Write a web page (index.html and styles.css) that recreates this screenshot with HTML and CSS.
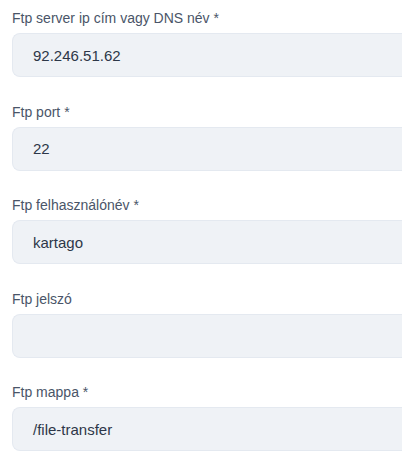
FILE: index.html
```html
<!DOCTYPE html>
<html lang="hu">
<head>
<meta charset="utf-8">
<link rel="stylesheet" href="styles.css">
</head>
<body>
<form class="form">
  <div class="field">
    <label class="label">Ftp server ip cím vagy DNS név *</label>
    <div class="input">92.246.51.62</div>
  </div>
  <div class="field">
    <label class="label">Ftp port *</label>
    <div class="input">22</div>
  </div>
  <div class="field">
    <label class="label">Ftp felhasználónév *</label>
    <div class="input">kartago</div>
  </div>
  <div class="field">
    <label class="label">Ftp jelszó</label>
    <div class="input"></div>
  </div>
  <div class="field">
    <label class="label">Ftp mappa *</label>
    <div class="input">/file-transfer</div>
  </div>
</form>
</body>
</html>
```

FILE: styles.css
```css
html, body {
  margin: 0;
  padding: 0;
  background: #ffffff;
}
body {
  font-family: "Liberation Sans", Arial, sans-serif;
}
.form {
  display: flex;
  flex-direction: column;
  padding: 10px 2px 0 12px;
  gap: 26.5px;
}
.field {
  display: flex;
  flex-direction: column;
  gap: 7px;
}
.label {
  font-size: 14px;
  line-height: 16px;
  color: #4a5568;
}
.input {
  box-sizing: border-box;
  height: 44px;
  border: 1px solid #e4e9f0;
  border-right: none;
  border-radius: 8px 0 0 8px;
  background: #eff2f6;
  padding: 0 20px;
  display: flex;
  align-items: center;
  font-size: 15px;
  color: #2d3748;
}
```
